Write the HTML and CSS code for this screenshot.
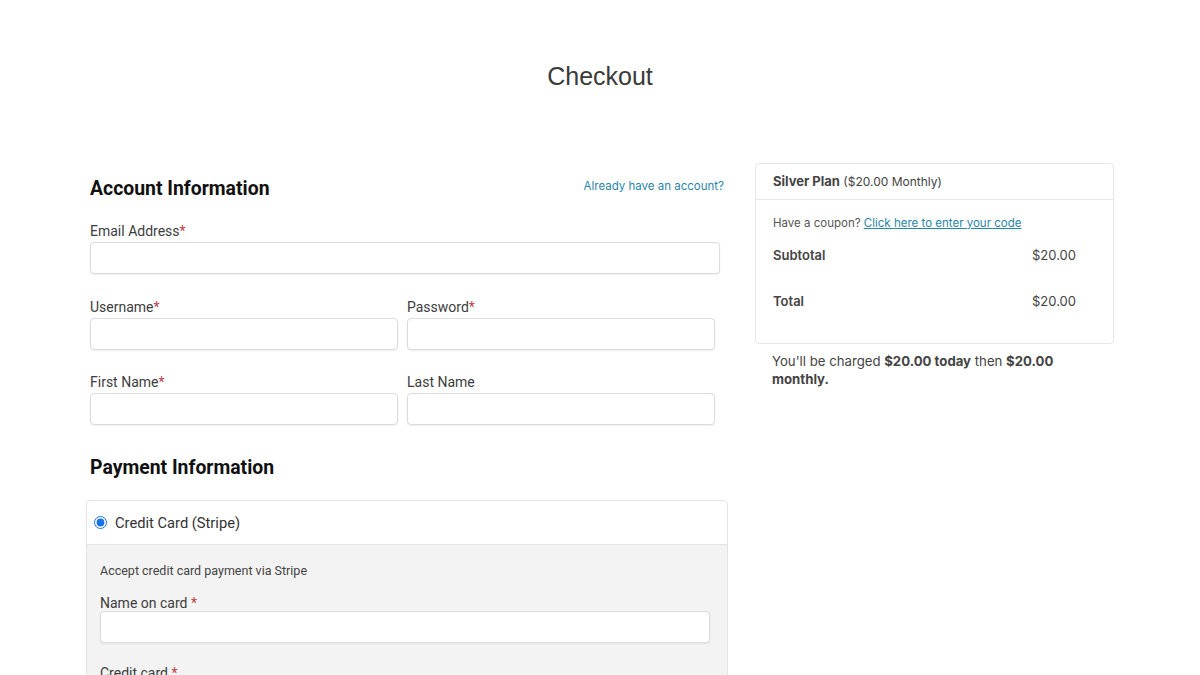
FILE: index.html
```html
<!DOCTYPE html>
<html lang="en">
<head>
  <meta charset="UTF-8">
  <title>Checkout</title>
  <link rel="stylesheet" href="styles.css">
</head>
<body>

  <h1 class="page-title">Checkout</h1>

  <div class="checkout">

    <div class="form-col">
      <div class="section-head">
        <h2>Account Information</h2>
        <a href="#" class="login-link">Already have an account?</a>
      </div>

      <div class="field email">
        <label>Email Address<span class="req">*</span></label>
        <input type="text">
      </div>

      <div class="row">
        <div class="field">
          <label>Username<span class="req">*</span></label>
          <input type="text">
        </div>
        <div class="field">
          <label>Password<span class="req">*</span></label>
          <input type="password">
        </div>
      </div>

      <div class="row">
        <div class="field">
          <label>First Name<span class="req">*</span></label>
          <input type="text">
        </div>
        <div class="field">
          <label>Last Name</label>
          <input type="text">
        </div>
      </div>

      <h2 class="pay-title">Payment Information</h2>

      <div class="gateway">
        <div class="gateway-head">
          <input type="radio" checked>
          <span>Credit Card (Stripe)</span>
        </div>
        <div class="gateway-body">
          <p class="gateway-desc">Accept credit card payment via Stripe</p>
          <div class="field">
            <label>Name on card <span class="req">*</span></label>
            <input type="text">
          </div>
          <div class="field">
            <label>Credit card <span class="req">*</span></label>
            <input type="text">
          </div>
        </div>
      </div>
    </div>

    <div class="summary-col">
      <div class="summary">
        <div class="summary-head"><strong>Silver Plan</strong> <span>($20.00 Monthly)</span></div>
        <div class="summary-body">
          <p class="coupon">Have a coupon? <a href="#">Click here to enter your code</a></p>
          <div class="line">
            <strong>Subtotal</strong>
            <span>$20.00</span>
          </div>
          <div class="line">
            <strong>Total</strong>
            <span>$20.00</span>
          </div>
        </div>
      </div>
      <p class="charge-note">You'll be charged <strong>$20.00 today</strong> then <strong>$20.00 monthly.</strong></p>
    </div>

  </div>

</body>
</html>
```

FILE: styles.css
```css
body {
  margin: 0;
  font-family: Roboto, "Liberation Sans", sans-serif;
  color: #333;
  background: #fff;
}

.page-title {
  margin: 0;
  padding-top: 61px;
  font-family: "Liberation Sans", Arial, sans-serif;
  font-size: 25px;
  font-weight: normal;
  text-align: center;
  color: #3a3a3a;
  line-height: 30px;
}

.checkout {
  display: flex;
  gap: 27px;
  width: 1028px;
  margin: 72px auto 0;
}

.form-col {
  width: 642px;
  flex-shrink: 0;
}

.section-head {
  display: flex;
  justify-content: space-between;
  align-items: flex-start;
  padding: 0 4px;
  margin-top: 14px;
}

h2 {
  margin: 0;
  font-size: 19.4px;
  font-weight: 700;
  color: #111;
}

.login-link {
  margin-top: 2px;
  font-family: Inter, sans-serif;
  font-size: 11.5px;
  color: #2a86a8;
  text-decoration: none;
}

.field {
  padding: 0 4px;
}

.field label {
  display: block;
  font-size: 14px;
  color: #3d3d3d;
  margin-bottom: 3px;
}

.req {
  color: #c0404a;
}

input[type="text"], input[type="password"] {
  display: block;
  box-sizing: border-box;
  width: 100%;
  height: 32px;
  border: 1px solid #dcdcdc;
  border-radius: 4px;
  box-shadow: 0 1px 2px rgba(0, 0, 0, 0.07);
  background: #fff;
}

.email {
  width: 630px;
  margin-top: 23px;
}

.row {
  display: flex;
  gap: 9px;
  width: 625px;
  padding: 0 4px;
}

.row .field {
  flex: 1;
  padding: 0;
  margin-top: 25px;
}

.row + .row .field {
  margin-top: 24px;
}

.pay-title {
  margin: 31px 4px 0;
}

.gateway {
  margin-top: 21px;
  border: 1px solid #e4e4e4;
  border-radius: 4px 4px 0 0;
  overflow: hidden;
}

.gateway-head {
  display: flex;
  align-items: center;
  gap: 8px;
  height: 43px;
  padding: 0 7px;
  font-size: 14.7px;
  color: #333;
  background: #fff;
  border-bottom: 1px solid #e4e4e4;
}

.gateway-head input {
  margin: 0;
  width: 13px;
  height: 13px;
  accent-color: #1a73e8;
}

.gateway-body {
  background: #f3f3f3;
  padding: 18px 17px 20px 13px;
}

.gateway-desc {
  margin: 0;
  font-size: 12.5px;
  color: #444;
}

.gateway-body .field {
  padding: 0;
  margin-top: 17px;
}

.gateway-body .field label {
  margin-bottom: 0;
}

.gateway-body .field + .field {
  margin-top: 22px;
}

.summary-col {
  width: 359px;
  font-family: Inter, sans-serif;
}

.summary {
  border: 1px solid #e6e6e6;
  border-radius: 4px;
}

.summary-head {
  height: 35px;
  line-height: 35px;
  padding: 0 17px;
  border-bottom: 1px solid #e8e8e8;
  font-size: 12px;
  color: #444;
}

.summary-head strong {
  font-size: 13px;
  color: #444;
}

.summary-body {
  padding: 16px 37px 21px 17px;
}

.coupon {
  margin: 0;
  font-size: 11.5px;
  color: #555;
}

.coupon a {
  color: #2a86a8;
}

.line {
  display: flex;
  justify-content: space-between;
  font-size: 13px;
  color: #444;
  margin-top: 17px;
  height: 29px;
}

.line strong {
  font-weight: 600;
}

.charge-note {
  margin: 8px 17px 0;
  font-size: 13.2px;
  line-height: 18px;
  color: #444;
}
```
